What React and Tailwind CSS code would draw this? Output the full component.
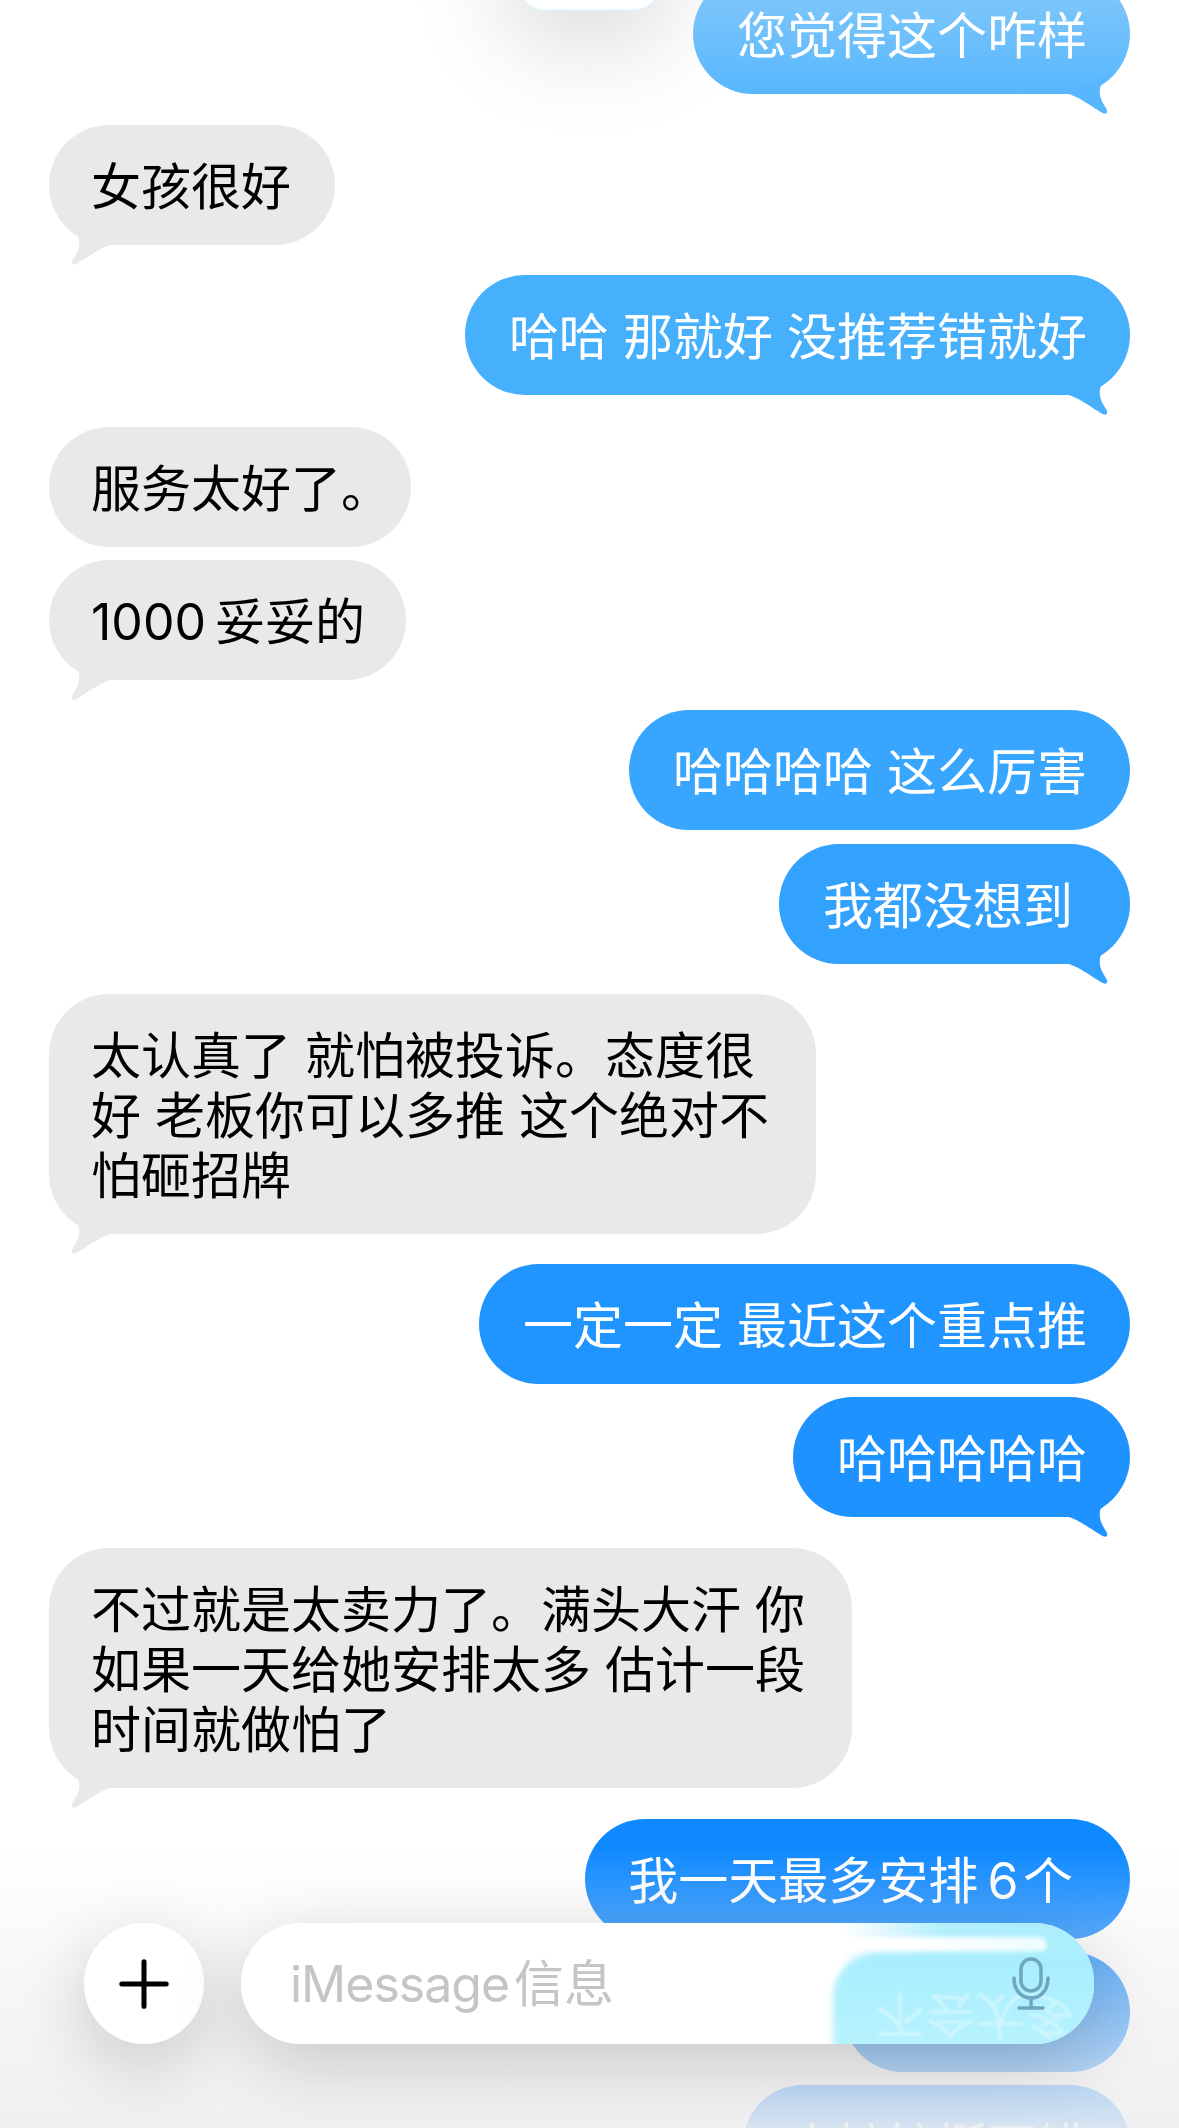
import React from 'react';
import { Plus } from 'lucide-react';

const grayPad = 'pl-[42px] pr-[44px]';
const bluePad = 'pl-[44px] pr-[43px]';

const messages = [
    { side: 'me', text: ['您觉得这个咋样'], tail: true, gap: 'mb-[31px]', pad: bluePad, bg: 'bg-gradient-to-b from-[#84c9f9] to-[#57b7fe]', tailColor: 'text-[#57b7fe]' },
    { side: 'them', text: ['女孩很好'], tail: true, gap: 'mb-[30px]', pad: grayPad },
    { side: 'me', text: ['哈哈 那就好 没推荐错就好'], tail: true, gap: 'mb-[32px]', pad: bluePad, bg: 'bg-[#46b0fd]', tailColor: 'text-[#46b0fd]' },
    { side: 'them', text: ['服务太好了。'], gap: 'mb-[13px]', pad: 'pl-[42px] pr-[20px]' },
    { side: 'them', text: ['1000\u2009妥妥的'], tail: true, gap: 'mb-[30px]', pad: 'pl-[42px] pr-[41px]' },
    { side: 'me', text: ['哈哈哈哈 这么厉害'], gap: 'mb-[14px]', pad: bluePad, bg: 'bg-[#38a6fe]', tailColor: 'text-[#38a6fe]' },
    { side: 'me', text: ['我都没想到'], tail: true, gap: 'mb-[30px]', pad: 'pl-[44px] pr-[57px]', bg: 'bg-[#33a2fe]', tailColor: 'text-[#33a2fe]' },
    { side: 'them', text: ['太认真了 就怕被投诉。态度很', '好 老板你可以多推 这个绝对不', '怕砸招牌'], tail: true, gap: 'mb-[30px]', pad: 'pl-[42px] pr-[47px]' },
    { side: 'me', text: ['一定一定 最近这个重点推'], gap: 'mb-[13px]', pad: bluePad, bg: 'bg-[#2095ff]', tailColor: 'text-[#2095ff]' },
    { side: 'me', text: ['哈哈哈哈哈'], tail: true, gap: 'mb-[31px]', pad: bluePad, bg: 'bg-[#1e92ff]', tailColor: 'text-[#1e92ff]' },
    { side: 'them', text: ['不过就是太卖力了。满头大汗 你', '如果一天给她安排太多 估计一段', '时间就做怕了'], tail: true, gap: 'mb-[31px]', pad: 'pl-[42px] pr-[47px]' },
    { side: 'me', text: ['我一天最多安排\u20096\u200a个'], gap: 'mb-[13px]', pad: 'pl-[43px] pr-[57px]', bg: 'bg-[#0f89ff]', tailColor: 'text-[#0f89ff]' },
    { side: 'me', text: ['不会太多'], gap: 'mb-[13px]', pad: bluePad, bg: 'bg-[#0f89ff]', tailColor: 'text-[#0f89ff]' },
    { side: 'me', text: ['小姑娘挺不错'], gap: 'mb-[13px]', pad: bluePad, bg: 'bg-[#0f89ff]', tailColor: 'text-[#0f89ff]' },
];

// iOS style bubble tail, mirrored for the left side
const Tail = ({ side, color }) => (
    <svg
        viewBox="0 0 72 60"
        className={`absolute bottom-[-21px] w-[72px] h-[60px] fill-current ${side === 'me' ? `right-[-2px] ${color}` : 'left-[-2px] -scale-x-100 text-[#e9e9eb]'}`}
    >
        <path d="M0 39 L8 39 C16 40 34 53 41 57 C44 59 48 60 47 55 C46 52 38 44 40 33 C42 26 48 22 56 18 L0 39 Z" />
    </svg>
);

const Bubble = ({ msg }) => {
    const isMe = msg.side === 'me';
    return (
        <div className={`flex ${isMe ? 'justify-end pr-[49px]' : 'justify-start pl-[49px]'} ${msg.gap}`}>
            <div
                className={`relative rounded-[60px] pt-[32px] pb-[28px] ${msg.pad} text-[50px] leading-[60px] whitespace-nowrap ${isMe ? `${msg.bg} text-white` : 'bg-[#e9e9eb] text-black'}`}
            >
                {msg.tail && <Tail side={msg.side} color={msg.tailColor} />}
                <div className="relative">
                    {msg.text.map((line) => (
                        <div key={line}>{line}</div>
                    ))}
                </div>
            </div>
        </div>
    );
};

const MicIcon = () => (
    <svg viewBox="0 0 38 54" className="w-[38px] h-[54px] fill-none stroke-[#6ea6bf]" strokeWidth="3.5" strokeLinecap="round">
        <rect x="9" y="2" width="20" height="32" rx="10" />
        <path d="M2 21 C2 33 9 41 19 41 C29 41 36 33 36 21" />
        <path d="M19 41 L19 50" />
        <path d="M7 51 L31 51" />
    </svg>
);

export default function App() {
    return (
        <div className="relative w-[1179px] h-[2128px] overflow-hidden bg-white font-['Inter','Noto_Sans_CJK_SC',sans-serif]">
            {/* clipped popup at the very top */}
            <div className="absolute left-[517px] top-[-100px] w-[145px] h-[111px] rounded-[28px] bg-white border-2 border-[#e2f7fd] shadow-[0_20px_110px_rgba(0,0,0,0.2)]" />

            <div className="relative mt-[-26px]">
                {messages.map((msg, i) => (
                    <Bubble key={i} msg={msg} />
                ))}
            </div>

            {/* fog behind the input bar */}
            <div className="absolute left-0 right-0 bottom-0 h-[280px] bg-gradient-to-b from-[#eeeef0]/0 via-[#eeeef0]/50 to-[#eeeef0]/90" />

            {/* input bar */}
            <div className="absolute left-[84px] top-[1923px] flex gap-[37px]">
                <div className="flex items-center justify-center w-[120px] h-[121px] rounded-full bg-white shadow-[0_20px_70px_rgba(0,0,0,0.18)]">
                    <Plus size={76} strokeWidth={1.6} className="text-black" />
                </div>
                <div className="relative w-[853px] h-[121px] rounded-[60px] shadow-[0_20px_70px_rgba(0,0,0,0.18)]">
                    <div className="absolute inset-0 rounded-[60px] bg-white overflow-hidden">
                        {/* glass highlight on the right */}
                        <div className="absolute left-[600px] right-0 top-0 bottom-0 bg-gradient-to-r from-white via-[#b2effc] via-40% to-[#aceefc]" />
                        <div className="absolute left-[540px] top-[14px] w-[266px] h-[16px] rounded-full bg-gradient-to-r from-white via-white to-[#ecfcff] blur-[2px]" />
                        <div className="absolute left-[560px] w-[32px] top-[20px] bottom-0 bg-white" />
                        <div className="absolute left-[592px] right-[-10px] top-[30px] bottom-[-10px] rounded-tl-[44px] bg-gradient-to-b from-[#a8eefe] to-[#b8f3fe] blur-[3px]" />
                        <div className="absolute left-[634px] top-[62px] text-[50px] leading-[60px] text-white/35 -scale-y-100 blur-[1px] whitespace-nowrap">不会太多</div>
                    </div>
                    <div className="absolute inset-0 flex items-center justify-between pl-[49px] pr-[44px]">
                        <span className="relative text-[50px] leading-[60px] text-[#c5c5c7]">
                            <span className="tracking-[-1px]">iMessage</span>
                            <span className="ml-[5px]">信息</span>
                        </span>
                        <span className="relative"><MicIcon /></span>
                    </div>
                </div>
            </div>
        </div>
    );
}
